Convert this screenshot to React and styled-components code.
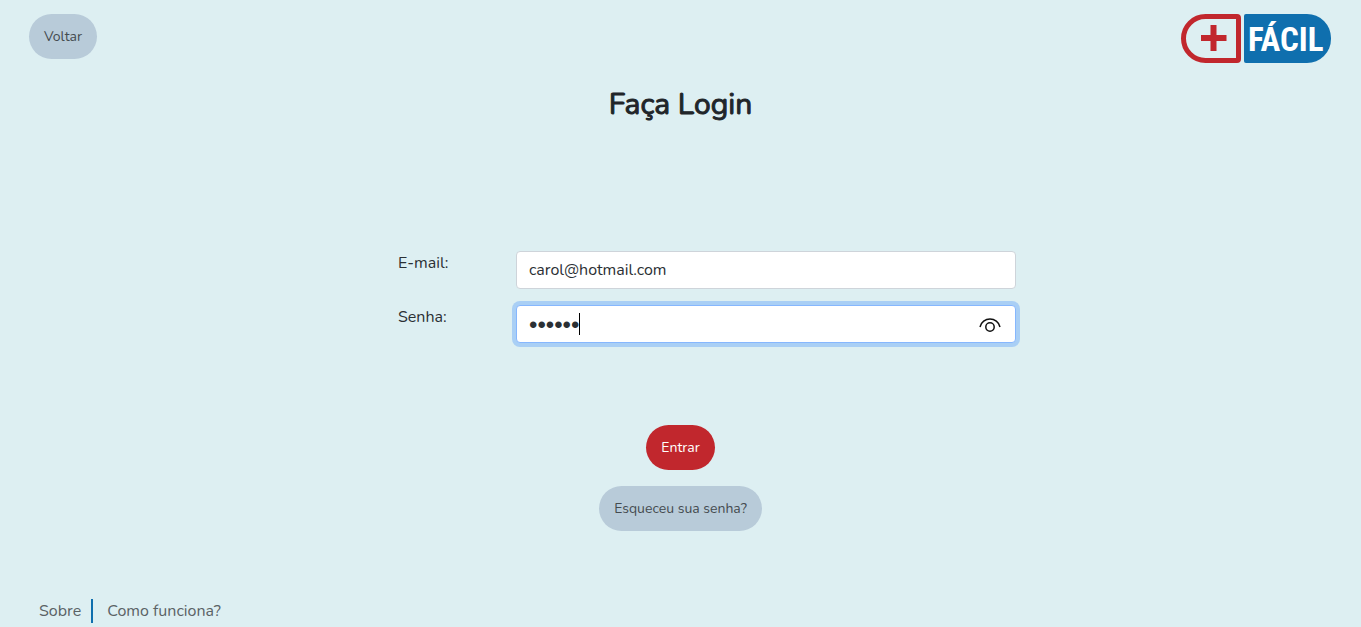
import React, { useState } from "react";
import styled, { createGlobalStyle, css } from "styled-components";

const GlobalStyle = createGlobalStyle`
  *, *::before, *::after { box-sizing: border-box; }
  body {
    margin: 0;
    background: #ddeff2;
    color: #2b3034;
    font-family: Nunito, "Open Sans", sans-serif;
    font-size: 16px;
    font-weight: 400;
    line-height: 24px;
  }
`;

const Page = styled.div`
  min-height: 100vh;
  display: flex;
  flex-direction: column;
`;

const Header = styled.header`
  display: flex;
  justify-content: space-between;
  align-items: flex-start;
  padding: 14px 30px 0 29px;
`;

const Logo = styled.svg`
  display: block;
  width: 150px;
  height: 49px;
`;

const LogoText = styled.text`
  font-family: "Liberation Sans Narrow", "Roboto Condensed", sans-serif;
  font-size: 33px;
  font-weight: 700;
  fill: #fff;
`;

const PillButton = styled.button`
  height: 45px;
  padding: 0 15px;
  border: 0;
  border-radius: 23px;
  background: ${(p) => (p.$primary ? "#c1272d" : "#b8cbd9")};
  color: ${(p) => (p.$primary ? "#fff" : "#454b50")};
  font-family: inherit;
  font-size: 14px;
  font-weight: 400;
  cursor: pointer;
`;

const Main = styled.main`
  display: flex;
  flex-direction: column;
  align-items: center;
  padding-top: 22px;
`;

const Title = styled.h1`
  margin: 0;
  color: #212529;
  font-size: 30px;
  font-weight: 400;
  line-height: 40px;
  -webkit-text-stroke: 1px currentColor;
`;

const LoginForm = styled.form`
  display: flex;
  flex-direction: column;
  align-items: center;
  width: 100%;
  padding-top: 126px;
`;

const Fields = styled.div`
  display: flex;
  flex-direction: column;
  gap: 16px;
  width: 100%;
  max-width: 671px;
  padding-left: 53px;
`;

const Row = styled.div`
  display: flex;
  align-items: flex-start;
`;

const Label = styled.label`
  flex: 0 0 118px;
`;

const Control = styled.div`
  position: relative;
  flex: 1;
`;

const Input = styled.input`
  display: block;
  width: 100%;
  height: 38px;
  padding: 0 12px;
  border: 1px solid #ced4da;
  border-radius: 4px;
  outline: 0;
  background: #fff;
  color: #2b3034;
  font-family: inherit;
  font-size: 16px;
  font-weight: inherit;
  ${(p) =>
    p.$active &&
    css`
      border-color: #86b7fe;
      box-shadow: 0 0 0 4px #a9cff5;
    `}
  &[type="password"] {
    padding-top: 2px;
    padding-right: 48px;
    font-family: "Liberation Sans", sans-serif;
    font-size: 24px;
  }
`;

const Caret = styled.span`
  position: absolute;
  left: 63px;
  top: 8px;
  width: 1px;
  height: 22px;
  background: #000;
`;

const RevealButton = styled.button`
  position: absolute;
  right: 14px;
  top: 8px;
  width: 24px;
  height: 22px;
  padding: 0;
  border: 0;
  background: none;
  cursor: pointer;
  svg { display: block; }
`;

const Actions = styled.div`
  display: flex;
  flex-direction: column;
  align-items: center;
  gap: 16px;
  padding-top: 82px;
`;

const Footer = styled.footer`
  display: flex;
  margin-top: auto;
  padding: 0 39px 4px;
`;

const FooterLink = styled.a`
  color: #5a6265;
  text-decoration: none;
  & + & {
    margin-left: 10px;
    padding-left: 14px;
    border-left: 2px solid #0f6fae;
  }
`;

function PillLogo() {
  return (
    <Logo viewBox="0 0 150 49" role="img" aria-label="+ Fácil">
      <path
        d="M24.500 2.500H56Q57.500 2.500 57.500 4V45Q57.500 46.500 56 46.500H24.500A22 22 0 0 1 24.500 2.500Z"
        fill="none"
        stroke="#c1272d"
        strokeWidth="5"
      />
      <path d="M32.500 11V37M20 24H45.500" fill="none" stroke="#c1272d" strokeWidth="6" />
      <path
        d="M65 0H126A24 24 0 0 1 150 24V25A24 24 0 0 1 126 49H65Q63 49 63 47V2Q63 0 65 0Z"
        fill="#0f6fae"
      />
      <LogoText x="67" y="37">FÁCIL</LogoText>
    </Logo>
  );
}

export default function App() {
  const [email, setEmail] = useState("carol@hotmail.com");
  const [password, setPassword] = useState("123456");

  return (
    <>
      <GlobalStyle />
      <Page>
        <Header>
          <PillButton type="button">Voltar</PillButton>
          <PillLogo />
        </Header>
        <Main>
          <Title>Faça Login</Title>
          <LoginForm onSubmit={(e) => e.preventDefault()}>
            <Fields>
              <Row>
                <Label htmlFor="email">E-mail:</Label>
                <Control>
                  <Input id="email" type="email" value={email} onChange={(e) => setEmail(e.target.value)} />
                </Control>
              </Row>
              <Row>
                <Label htmlFor="senha">Senha:</Label>
                <Control>
                  <Input
                    id="senha"
                    type="password"
                    $active
                    value={password}
                    onChange={(e) => setPassword(e.target.value)}
                  />
                  <Caret aria-hidden="true" />
                  <RevealButton type="button" aria-label="Mostrar senha">
                    <svg width="24" height="22" viewBox="0 0 24 22" fill="none" stroke="#111" strokeWidth="1.5">
                      <path d="M2 14C3 9 7.500 6 12 6S21 9 22 14" />
                      <circle cx="12" cy="14" r="4.200" />
                    </svg>
                  </RevealButton>
                </Control>
              </Row>
            </Fields>
            <Actions>
              <PillButton type="submit" $primary>Entrar</PillButton>
              <PillButton type="button">Esqueceu sua senha?</PillButton>
            </Actions>
          </LoginForm>
        </Main>
        <Footer>
          <FooterLink href="#sobre">Sobre</FooterLink>
          <FooterLink href="#como-funciona">Como funciona?</FooterLink>
        </Footer>
      </Page>
    </>
  );
}
